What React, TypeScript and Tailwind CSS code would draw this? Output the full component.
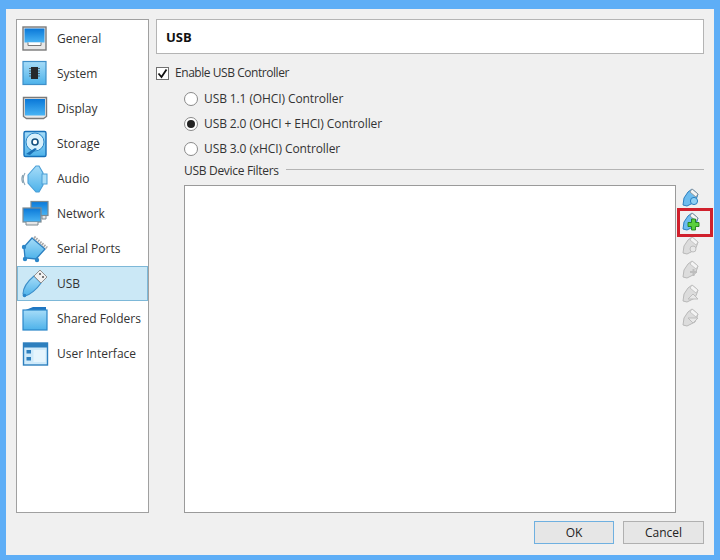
import type { ReactNode } from "react";

const fontStack = { fontFamily: '"Open Sans", "Noto Sans", sans-serif' };

function Frame({ children }: { children: ReactNode }) {
  return (
    <svg width="30" height="30" viewBox="0 0 30 30" className="shrink-0">
      <defs>
        <linearGradient id="blueFill" x1="0" y1="0" x2="0" y2="1">
          <stop offset="0" stopColor="#0a78d8" />
          <stop offset="1" stopColor="#49b4f4" />
        </linearGradient>
        <linearGradient id="paleFill" x1="0" y1="0" x2="0" y2="1">
          <stop offset="0" stopColor="#a6dcf8" />
          <stop offset="1" stopColor="#4db2ea" />
        </linearGradient>
      </defs>
      {children}
    </svg>
  );
}

const sideIcons: Record<string, ReactNode> = {
  General: (
    <Frame>
      <rect x="3" y="3" width="23" height="23" fill="#e8e8e8" stroke="#7a7a7a" strokeWidth="1.4" />
      <rect x="4.5" y="4.5" width="20" height="14" fill="url(#blueFill)" />
      <path d="M8 18.5v3h13v-3" fill="#fff" stroke="#777" />
    </Frame>
  ),
  System: (
    <Frame>
      <rect x="3" y="2.5" width="23" height="23" fill="url(#paleFill)" stroke="#3f8fc8" strokeWidth="1.2" />
      <rect x="11" y="8" width="7" height="12" fill="#26292c" />
      <path d="M9 9.5h2M9 12h2M9 14.5h2M9 17h2M18 9.5h2M18 12h2M18 14.5h2M18 17h2" stroke="#48606e" strokeWidth="0.9" />
    </Frame>
  ),
  Display: (
    <Frame>
      <path d="M3.5 3.5h23v19l-3 2h-17l-3-2z" fill="#e8e8e8" stroke="#7a7a7a" strokeWidth="1.4" />
      <rect x="5" y="5" width="20" height="16.5" fill="url(#blueFill)" />
    </Frame>
  ),
  Storage: (
    <Frame>
      <rect x="4" y="2.5" width="22" height="25" rx="1.5" fill="url(#paleFill)" stroke="#1770b8" strokeWidth="1.4" />
      <ellipse cx="15" cy="13" rx="9" ry="9" fill="#d7f0fc" stroke="#2b86c8" />
      <circle cx="15" cy="13" r="3" fill="#fff" stroke="#14507f" strokeWidth="1.6" />
      <path d="M6 25l9-6 2 1-7 6z" fill="#1a6fb4" />
    </Frame>
  ),
  Audio: (
    <Frame>
      <path d="M8 11l8-9h3l4 7v12l-4 7h-3l-8-9z" fill="url(#paleFill)" stroke="#4a9ed6" strokeWidth="1.1" />
      <rect x="22" y="10" width="5" height="10" fill="#a9def8" stroke="#4a9ed6" />
      <path d="M5 9c-2.4 4-2.4 8 0 12M2.8 11c-1.4 3-1.4 5 0 8" fill="none" stroke="#8ba4b4" strokeWidth="1.1" />
    </Frame>
  ),
  Network: (
    <Frame>
      <rect x="11" y="2.5" width="17" height="14" fill="url(#blueFill)" stroke="#7d8a92" strokeWidth="1.2" />
      <rect x="3" y="9" width="18" height="14" fill="url(#blueFill)" stroke="#7d8a92" strokeWidth="1.2" />
      <path d="M6 23v3h12v-3" fill="#e6e6e6" stroke="#7d8a92" />
      <path d="M22 17v3h4v-3" fill="#e6e6e6" stroke="#7d8a92" />
    </Frame>
  ),
  "Serial Ports": (
    <Frame>
      <path d="M12 4l-8 9 1 11 11 1 9-10z" fill="url(#paleFill)" stroke="#2b7fc0" strokeWidth="1.3" />
      <path d="M14 3l13 11" stroke="#a8a8a8" strokeWidth="3" strokeDasharray="1.6 1" />
      <circle cx="4" cy="13" r="2.2" fill="#2b86c8" />
      <circle cx="5" cy="25" r="2.2" fill="#2b86c8" />
      <circle cx="17" cy="26" r="2.2" fill="#2b86c8" />
    </Frame>
  ),
  USB: (
    <Frame>
      <path d="M3 25C3 18 8 12 14 7l7 7c-4 6-11 12-16 13z" fill="url(#paleFill)" stroke="#3d8ec8" strokeWidth="1.1" />
      <path d="M14 7l6-6 7 7-6 6z" fill="#f0f0f0" stroke="#909090" />
      <rect x="19" y="4" width="2" height="2" fill="#777" />
      <rect x="22" y="7" width="2" height="2" fill="#777" />
      <circle cx="4.5" cy="26.5" r="1.8" fill="#2b86c8" />
    </Frame>
  ),
  "Shared Folders": (
    <Frame>
      <path d="M3 7l10-4h13v3H3z" fill="#1f76c2" />
      <rect x="3" y="6" width="24" height="20" fill="url(#paleFill)" stroke="#2b86c8" strokeWidth="1.2" />
    </Frame>
  ),
  "User Interface": (
    <Frame>
      <rect x="3.5" y="4" width="24" height="22" fill="#cfeafa" stroke="#2d7fbe" strokeWidth="1.4" />
      <rect x="3.5" y="4" width="24" height="4.5" fill="#2d7fbe" />
      <rect x="6.5" y="11" width="4.5" height="3.5" fill="#2d7fbe" />
      <rect x="6.5" y="18" width="4.5" height="3.5" fill="#2d7fbe" />
      <rect x="13.5" y="11" width="12" height="12" fill="#e6f5fd" />
    </Frame>
  ),
};

const sideItems = [
  "General",
  "System",
  "Display",
  "Storage",
  "Audio",
  "Network",
  "Serial Ports",
  "USB",
  "Shared Folders",
  "User Interface",
];

function FilterIcon({ mark, disabled }: { mark?: ReactNode; disabled?: boolean }) {
  return (
    <svg width="20" height="20" viewBox="0 0 20 20" className="block shrink-0">
      <path
        d="M11 1l6 5-1 3-2 5-8 4-4-1 1-7 4-6z"
        fill={disabled ? "#dcdcdc" : "#6dbcee"}
        stroke={disabled ? "#b8b8b8" : "#2b7fc0"}
        strokeWidth="1"
      />
      <path d="M11 1l6 5-2 3-6-5z" fill="#f4f4f4" stroke={disabled ? "#bcbcbc" : "#8c8c8c"} strokeWidth="0.8" />
      {mark}
    </svg>
  );
}

const greyMark = "#bdbdbd";

function Radio({ checked, label }: { checked?: boolean; label: string }) {
  return (
    <div className="flex h-[25px] items-center gap-[6px] pl-[28px]">
      <span className="flex h-[14px] w-[14px] items-center justify-center rounded-full border border-[#8a8a8a] bg-white">
        {checked && <span className="h-[8px] w-[8px] rounded-full bg-[#222]" />}
      </span>
      <span className="tracking-[-0.1px]">{label}</span>
    </div>
  );
}

export default function App() {
  return (
    <div
      className="flex h-[560px] w-[720px] flex-col bg-[#5eaef6] pb-[5px] pl-[6px] pr-[6px] pt-[9px] text-[12px] text-[#333]"
      style={fontStack}
    >
      <div className="flex min-h-0 flex-1 flex-col bg-[#f0f0f0] px-[10px] pb-[11px] pt-[10px]">
        <div className="flex min-h-0 flex-1 gap-[7px]">
          <nav className="flex h-[494px] w-[133px] shrink-0 flex-col border border-[#a0a0a0] bg-white pt-px">
            {sideItems.map((name) => (
              <div
                key={name}
                className={
                  name === "USB"
                    ? "flex h-[35px] items-center gap-[7px] border border-[#7db8d8] bg-[#cbe8f6] pl-[2px]"
                    : "flex h-[35px] items-center gap-[7px] border border-transparent pl-[2px]"
                }
              >
                {sideIcons[name]}
                <span className="whitespace-nowrap">{name}</span>
              </div>
            ))}
          </nav>

          <div className="flex min-w-0 flex-1 flex-col">
            <div className="flex h-[35px] shrink-0 items-center border border-[#b4b4b4] bg-white pl-[9px] pt-[3px] text-[13px] font-bold text-[#111]">
              USB
            </div>

            <div className="mt-[9px] flex h-[20px] shrink-0 items-center gap-[6px]">
              <span className="flex h-[13px] w-[13px] items-center justify-center border border-[#707070] bg-white">
                <svg width="11" height="11" viewBox="0 0 11 11">
                  <path d="M1.5 5.5l3 3.5 5-7.5" fill="none" stroke="#111" strokeWidth="1.8" />
                </svg>
              </span>
              <span className="tracking-[-0.45px]">Enable USB Controller</span>
            </div>

            <div className="mt-[3px] flex shrink-0 flex-col">
              <Radio label="USB 1.1 (OHCI) Controller" />
              <Radio checked label="USB 2.0 (OHCI + EHCI) Controller" />
              <Radio label="USB 3.0 (xHCI) Controller" />
            </div>

            <div className="flex h-[20px] shrink-0 items-center gap-[7px] pl-[28px]">
              <span className="whitespace-nowrap tracking-[-0.3px]">USB Device Filters</span>
              <span className="mb-[4px] h-px flex-1 bg-[#b4b4b4]" />
            </div>

            <div className="mt-[4px] flex shrink-0 pl-[28px]">
              <div className="h-[328px] w-[492px] shrink-0 border border-[#9a9a9a] bg-white" />
              <div className="flex w-[28px] shrink-0 flex-col gap-[4px] pl-[5px] pt-[3px]">
                <FilterIcon mark={<circle cx="13" cy="13" r="3.6" fill="#8fd0f4" stroke="#2b7fc0" />} />
                <div className="relative">
                  <FilterIcon
                    mark={
                      <path
                        d="M10.5 7h4v3.5H18v4h-3.5V18h-4v-3.5H7v-4h3.5z"
                        fill="#5ad03c"
                        stroke="#1f7f18"
                        strokeWidth="0.9"
                      />
                    }
                  />
                  <div className="absolute -left-[4px] -top-[4px] h-[29px] w-[36px] border-[3px] border-[#d0202c]" />
                </div>
                <FilterIcon disabled mark={<circle cx="12" cy="13" r="3" fill="#e8e8e8" stroke={greyMark} />} />
                <FilterIcon disabled mark={<path d="M9 12h7M12.5 9v7" stroke={greyMark} strokeWidth="2" />} />
                <FilterIcon disabled mark={<path d="M7 15l5-5 5 5z" fill="#e8e8e8" stroke={greyMark} />} />
                <FilterIcon disabled mark={<path d="M7 10l5 5 5-5z" fill="#e8e8e8" stroke={greyMark} />} />
              </div>
            </div>
          </div>
        </div>

        <div className="mt-[8px] flex justify-end gap-[9px]">
          <button className="h-[23px] w-[80px] border border-[#6fb0e0] bg-[#e6e6e6] text-[12px] text-[#222]">
            OK
          </button>
          <button className="h-[23px] w-[81px] border border-[#b0b0b0] bg-[#e6e6e6] text-[12px] text-[#222]">
            Cancel
          </button>
        </div>
      </div>
    </div>
  );
}
